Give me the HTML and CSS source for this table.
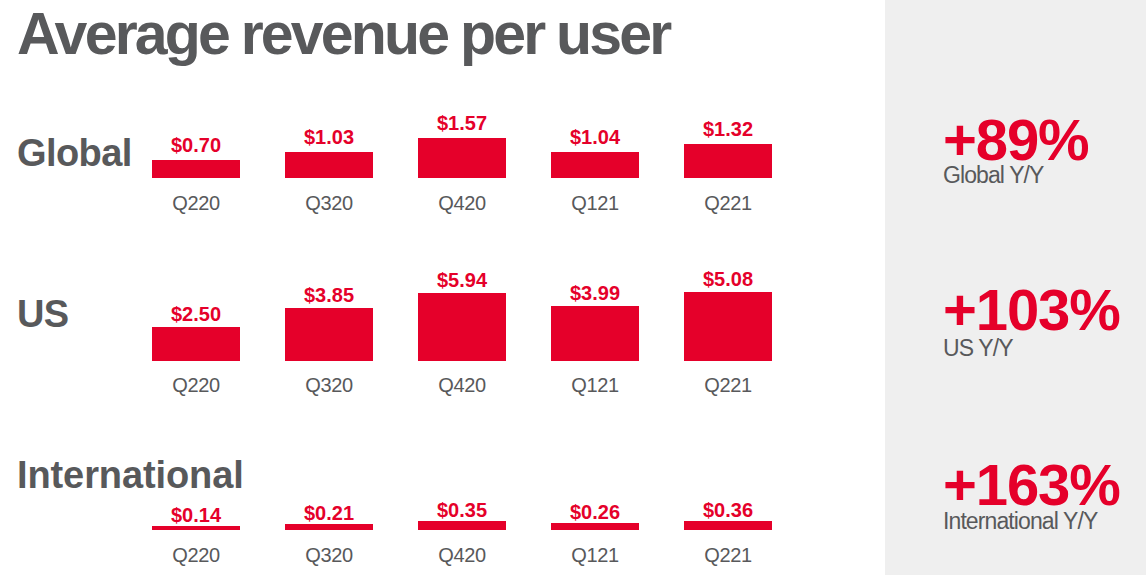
FILE: index.html
```html
<!DOCTYPE html>
<html lang="en">
<head>
<meta charset="utf-8">
<title>Average revenue per user</title>
<link rel="stylesheet" href="styles.css">
</head>
<body>
<div class="page">
  <main class="main">
    <h1 class="title">Average revenue per user</h1>

    <section class="row row-global">
      <div class="row-label">Global</div>
      <div class="chart">
        <div class="col"><div class="plot"><span class="val">$0.70</span><div class="bar" style="height:18px"></div></div><div class="q">Q220</div></div>
        <div class="col"><div class="plot"><span class="val">$1.03</span><div class="bar" style="height:26px"></div></div><div class="q">Q320</div></div>
        <div class="col"><div class="plot"><span class="val">$1.57</span><div class="bar" style="height:40px"></div></div><div class="q">Q420</div></div>
        <div class="col"><div class="plot"><span class="val">$1.04</span><div class="bar" style="height:26px"></div></div><div class="q">Q121</div></div>
        <div class="col"><div class="plot"><span class="val">$1.32</span><div class="bar" style="height:34px"></div></div><div class="q">Q221</div></div>
      </div>
    </section>

    <section class="row row-us">
      <div class="row-label">US</div>
      <div class="chart">
        <div class="col"><div class="plot"><span class="val">$2.50</span><div class="bar" style="height:34px"></div></div><div class="q">Q220</div></div>
        <div class="col"><div class="plot"><span class="val">$3.85</span><div class="bar" style="height:53px"></div></div><div class="q">Q320</div></div>
        <div class="col"><div class="plot"><span class="val">$5.94</span><div class="bar" style="height:68px"></div></div><div class="q">Q420</div></div>
        <div class="col"><div class="plot"><span class="val">$3.99</span><div class="bar" style="height:55px"></div></div><div class="q">Q121</div></div>
        <div class="col"><div class="plot"><span class="val">$5.08</span><div class="bar" style="height:69px"></div></div><div class="q">Q221</div></div>
      </div>
    </section>

    <section class="row row-intl">
      <div class="row-label">International</div>
      <div class="chart">
        <div class="col"><div class="plot"><span class="val">$0.14</span><div class="bar" style="height:4px"></div></div><div class="q">Q220</div></div>
        <div class="col"><div class="plot"><span class="val">$0.21</span><div class="bar" style="height:6px"></div></div><div class="q">Q320</div></div>
        <div class="col"><div class="plot"><span class="val">$0.35</span><div class="bar" style="height:10px"></div></div><div class="q">Q420</div></div>
        <div class="col"><div class="plot"><span class="val">$0.26</span><div class="bar" style="height:7px"></div></div><div class="q">Q121</div></div>
        <div class="col"><div class="plot"><span class="val">$0.36</span><div class="bar" style="height:10px"></div></div><div class="q">Q221</div></div>
      </div>
    </section>
  </main>

  <aside class="side">
    <div class="stat stat-global">
      <div class="stat-num">+89%</div>
      <div class="stat-sub">Global Y/Y</div>
    </div>
    <div class="stat stat-us">
      <div class="stat-num">+103%</div>
      <div class="stat-sub">US Y/Y</div>
    </div>
    <div class="stat stat-intl">
      <div class="stat-num">+163%</div>
      <div class="stat-sub">International Y/Y</div>
    </div>
  </aside>
</div>
</body>
</html>
```
FILE: styles.css
```css
* { box-sizing: border-box; }

html, body {
  margin: 0;
  padding: 0;
  background: #ffffff;
}

body {
  font-family: "Liberation Sans", Arial, sans-serif;
  color: #58595b;
  overflow: hidden;
}

.page {
  display: flex;
  width: 1146px;
  height: 575px;
}

.main {
  width: 885px;
  flex: none;
  padding-left: 17px;
}

.title {
  margin: 5px 0 0 0;
  font-size: 59px;
  line-height: 59px;
  font-weight: 700;
  letter-spacing: -2.8px;
  word-spacing: -1px;
  color: #58595b;
  white-space: nowrap;
}

.row {
  display: flex;
  align-items: flex-start;
}

.row-label {
  width: 135px;
  flex: none;
  font-size: 38px;
  line-height: 38px;
  font-weight: 700;
  letter-spacing: -0.6px;
  color: #58595b;
}

.chart {
  display: grid;
  grid-template-columns: repeat(5, 88px);
  column-gap: 45px;
}

.col {
  display: flex;
  flex-direction: column;
  align-items: stretch;
}

.plot {
  display: flex;
  flex-direction: column;
  justify-content: flex-end;
  align-items: center;
}

.val {
  display: block;
  font-size: 20px;
  line-height: 20px;
  font-weight: 700;
  color: #e5002a;
  white-space: nowrap;
  margin-bottom: 4px;
}

.bar {
  width: 88px;
  background: #e5002a;
}

.q {
  text-align: center;
  font-size: 20px;
  line-height: 20px;
  color: #58595b;
  letter-spacing: -0.3px;
}

/* Global */
.row-global { margin-top: 34px; }
.row-global .row-label { margin-top: 36px; }
.row-global .plot { height: 80px; }
.row-global .val { margin-bottom: 5px; }
.row-global .q { margin-top: 15px; }

/* US */
.row-us { margin-top: 38px; }
.row-us .row-label { margin-top: 44px; }
.row-us .plot { height: 110px; }
.row-us .val { margin-bottom: 3px; }
.row-us .q { margin-top: 14px; }

/* International */
.row-intl {
  flex-direction: column;
  margin-top: 61px;
}
.row-intl .row-label { width: auto; letter-spacing: -0.1px; }
.row-intl .chart { margin-left: 135px; margin-top: 6px; }
.row-intl .plot { height: 30px; }
.row-intl .val { margin-bottom: 1px; }
.row-intl .q { margin-top: 15px; }

/* Side panel */
.side {
  flex: 1;
  background: #efefef;
  padding-left: 58px;
  display: flex;
  flex-direction: column;
}

.stat-num {
  font-size: 58px;
  line-height: 46px;
  font-weight: 700;
  letter-spacing: -1.1px;
  color: #e5002a;
  white-space: nowrap;
}

.stat-sub {
  font-size: 23px;
  line-height: 23px;
  letter-spacing: -0.9px;
  color: #58595b;
  white-space: nowrap;
  margin-top: 1px;
}

.stat-global { margin-top: 117px; }
.stat-us { margin-top: 100px; }
.stat-us .stat-sub { margin-top: 4px; }
.stat-intl { margin-top: 102px; }
.stat-intl .stat-sub { margin-top: 2px; }
```
